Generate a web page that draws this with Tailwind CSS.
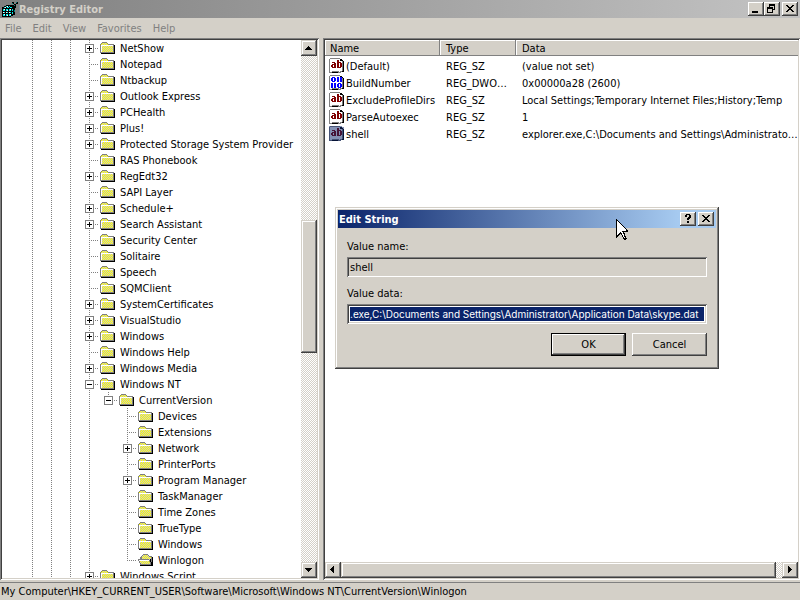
<!DOCTYPE html>
<html lang="en">
<head>
  <meta charset="UTF-8">
  <meta name="viewport" content="width=device-width, initial-scale=1.0">
  <title>Registry Editor</title>
  <script src="https://cdn.jsdelivr.net/npm/@tailwindcss/browser@4"></script>
</head>
<body class="relative flex h-screen flex-col overflow-hidden bg-[#d4d0c8] font-['DejaVu_Sans_Condensed','DejaVu_Sans',sans-serif] text-[11px] leading-4 text-black">

  <!-- shared icons -->
  <svg class="absolute size-0">
    <defs>
      <pattern id="dither" width="2" height="2" patternUnits="userSpaceOnUse">
        <rect width="2" height="2" fill="#ffff00"/>
        <path d="M0 0h1v1h-1zM1 1h1v1h-1z" fill="#c8c8c8"/>
      </pattern>
    </defs>
    <symbol id="folder" viewBox="0 0 16 16">
      <path d="M0 4h1V3h1V2h5v1h1v1h6v9H0z" fill="#808080"/>
      <path d="M1 4h1V3h5v1h1v1h5v8H1z" fill="url(#dither)"/>
      <path d="M1 5h12v1H2v7H1z" fill="#fff"/>
      <path d="M0 12h14v1H0z" fill="#808080"/>
      <path d="M14 5h1v9H1v-1h13z" fill="#000"/>
    </symbol>
    <symbol id="folder-open" viewBox="0 0 16 16">
      <path d="M3 4h1V3h1V2h5v1h1v1h3v9H2V5h1z" fill="#808080"/>
      <path d="M4 4h1V3h5v1h1v1h2v7H4z" fill="url(#dither)"/>
      <path d="M0 7h11v1h1v2h1v3H2v-2H1V9H0z" fill="#808080"/>
      <path d="M1 8h10v2h1v2H3v-1H2V9H1z" fill="url(#dither)"/>
      <path d="M1 8h10v1H1z" fill="#fff"/>
      <path d="M14 5h1v9H2v-1h12zM12 7h1v3h1v3h-1v-3h-1z" fill="#000"/>
    </symbol>
    <symbol id="page" viewBox="0 0 16 16">
      <path d="M0 1h1V0h10v1h2v1h1v12h-2v1H9v-1H3v1H0z" fill="#808080"/>
      <path d="M1 1h10v2h2v10h-2v1h-1v-1H3v1H1z" fill="#fff"/>
      <path d="M11 1v2h3v-1h-1V1zM14 3h1v11h-2v-1h1zM3 14h6v1H3z" fill="#000"/>
    </symbol>
    <symbol id="string" viewBox="0 0 16 16">
      <use href="#page"/>
      <path d="M3 4h3v1h1v5H3V9H2V7h1V6h2V5H3zM4 7v2h1V7zM8 2h2v2h2v1h1v4h-1v1H8zM10 5v4h1V5z" fill="#800000" fill-rule="evenodd"/>
    </symbol>
    <symbol id="binary" viewBox="0 0 16 16">
      <use href="#page"/>
      <path d="M3 2h3v1h1v3H6v1H3V6H2V3h1zM4 3v3h1V3zM8 2h2v5H8zM11 2h2v5h-2zM2 8h2v5H2zM5 8h2v5H5zM9 8h3v1h1v3h-1v1H9v-1H8V9h1zM10 9v3h1V9z" fill="#0000ff" fill-rule="evenodd"/>
    </symbol>
  </svg>

  <header class="flex h-[18px] shrink-0 items-center bg-linear-to-r/srgb from-[#808080] to-[#c0c0c0] to-95% px-0.5">
    <svg class="size-4" viewBox="0 0 16 16" shape-rendering="crispEdges">
      <path d="M0 6h2V5h2V4h5v2h4v8h-2v1h-2v1H0z" fill="#000"/>
      <path d="M10 1h2v2h-2zM14 1h2v2h-2zM12 3h2v4h-2zM9 4h4v2H9z" fill="#000"/>
      <path d="M4 5h2v1H4zM7 5h1v1H7zM2 6h2v1H2zM5 6h2v1H5zM8 6h2v1H8zM1 8h2v2H1zM4 8h2v2H4zM7 8h2v2H7zM1 11h2v1H1zM4 11h2v1H4zM7 11h2v1H7zM1 13h2v2H1zM4 13h2v2H4zM7 13h2v2H7zM10 8h1v2h-1zM10 11h1v2h-1z" fill="#00e8e8"/>
      <path d="M5 5h1v1H5zM3 6h1v1H3zM2 8h1v1H2zM5 9h1v1H5zM8 8h1v1H8zM1 11h1v1H1zM4 11h1v1H4zM7 11h1v1H7zM2 13h1v1H2zM5 14h1v1H5zM8 13h1v1H8z" fill="#fff"/>
      <path d="M14 1h1v1h-1zM12 4h1v1h-1zM10 2h1v1h-1zM12 9h1v2h-1z" fill="#008080"/>
    </svg>
    <h1 class="ml-px flex-1 pt-px font-bold text-[#d4d0c8]">Registry Editor</h1>
    <button aria-label="Minimize" class="h-3.5 w-4 bg-[#d4d0c8] shadow-[inset_-1px_-1px_#404040,inset_1px_1px_#fff,inset_-2px_-2px_#808080]">
      <svg class="h-3.5 w-4" viewBox="0 0 16 14" shape-rendering="crispEdges"><path d="M4 9h6v2H4z"/></svg>
    </button>
    <button aria-label="Restore" class="h-3.5 w-4 bg-[#d4d0c8] shadow-[inset_-1px_-1px_#404040,inset_1px_1px_#fff,inset_-2px_-2px_#808080]">
      <svg class="h-3.5 w-4" viewBox="0 0 16 14" shape-rendering="crispEdges"><path d="M5 2h6v6H9v3H3V5h2zM6 4v1h3v2h1V4zM4 7v3h4V7z" fill-rule="evenodd"/></svg>
    </button>
    <button aria-label="Close" class="ml-0.5 h-3.5 w-4 bg-[#d4d0c8] shadow-[inset_-1px_-1px_#404040,inset_1px_1px_#fff,inset_-2px_-2px_#808080]">
      <svg class="h-3.5 w-4" viewBox="0 0 16 14" shape-rendering="crispEdges"><path d="M4 3h2v1h1v1h2V4h1V3h2v1h-1v1h-1v1H9v1h1v1h1v1h1v1h-2V9H9V8H7v1H6v1H4V9h1V8h1V7h1V6H6V5H5V4H4z"/></svg>
    </button>
  </header>

  <nav class="flex h-5 shrink-0 items-center gap-[11px] px-[5px] pt-px text-[#808080]">
    <button>File</button>
    <button>Edit</button>
    <button>View</button>
    <button>Favorites</button>
    <button>Help</button>
  </nav>

  <main class="flex min-h-0 flex-1 gap-1 pb-0.5">
    <!-- key tree -->
    <section class="flex w-[319px] shrink-0 bg-white p-0.5 shadow-[inset_1px_1px_#808080,inset_-1px_-1px_#fff,inset_2px_2px_#404040,inset_-2px_-2px_#d4d0c8]">
      <ul id="tree" class="min-w-0 flex-1 overflow-hidden pl-[21px]"></ul>
      <div class="flex w-4 flex-col bg-[repeating-conic-gradient(#fff_0_25%,#d4d0c8_0_50%)] bg-[length:2px_2px]">
        <button aria-label="Scroll up" class="size-4 bg-[#d4d0c8] shadow-[inset_-1px_-1px_#404040,inset_1px_1px_#d4d0c8,inset_-2px_-2px_#808080,inset_2px_2px_#fff]">
          <svg class="size-4" viewBox="0 0 16 16" shape-rendering="crispEdges"><path d="M7 6h1v1h1v1h1v1h1v1H4V9h1V8h1V7h1z"/></svg>
        </button>
        <div class="grow-[164]"></div>
        <div class="h-[133px] bg-[#d4d0c8] shadow-[inset_-1px_-1px_#404040,inset_1px_1px_#d4d0c8,inset_-2px_-2px_#808080,inset_2px_2px_#fff]"></div>
        <div class="grow-[209]"></div>
        <button aria-label="Scroll down" class="size-4 bg-[#d4d0c8] shadow-[inset_-1px_-1px_#404040,inset_1px_1px_#d4d0c8,inset_-2px_-2px_#808080,inset_2px_2px_#fff]">
          <svg class="size-4" viewBox="0 0 16 16" shape-rendering="crispEdges"><path d="M4 6h7v1h-1v1H9v1H8v1H7V9H6V8H5V7H4z"/></svg>
        </button>
      </div>
    </section>

    <!-- values of the selected key -->
    <section class="flex min-w-0 flex-1 flex-col bg-white p-0.5 shadow-[inset_1px_1px_#808080,inset_-1px_-1px_#fff,inset_2px_2px_#404040,inset_-2px_-2px_#d4d0c8]">
      <div class="min-h-0 flex-1 overflow-hidden">
        <table class="w-full table-fixed text-left">
          <colgroup><col class="w-[115px]"><col class="w-[76px]"><col></colgroup>
          <thead class="bg-[#d4d0c8] leading-[14px]">
            <tr>
              <th class="p-0 pt-0.5 pl-[5px] font-normal shadow-[inset_-1px_-1px_#808080,inset_1px_1px_#fff]">Name</th>
              <th class="p-0 pt-0.5 pl-1.5 font-normal shadow-[inset_-1px_-1px_#808080,inset_1px_1px_#fff]">Type</th>
              <th class="p-0 pt-0.5 pl-1.5 font-normal shadow-[inset_0_-1px_#808080,inset_1px_1px_#fff]">Data</th>
            </tr>
          </thead>
          <tbody id="values" class="before:block before:h-0.5"></tbody>
        </table>
      </div>
      <div class="flex h-4 bg-[repeating-conic-gradient(#fff_0_25%,#d4d0c8_0_50%)] bg-[length:2px_2px]">
        <button aria-label="Scroll left" class="size-4 bg-[#d4d0c8] shadow-[inset_-1px_-1px_#404040,inset_1px_1px_#d4d0c8,inset_-2px_-2px_#808080,inset_2px_2px_#fff]">
          <svg class="size-4" viewBox="0 0 16 16" shape-rendering="crispEdges"><path d="M5 7h1V6h1V5h1V4h1v7H8v-1H7V9H6V8H5z"/></svg>
        </button>
        <div class="mr-1.5 flex-1 bg-[#d4d0c8] shadow-[inset_-1px_-1px_#404040,inset_1px_1px_#d4d0c8,inset_-2px_-2px_#808080,inset_2px_2px_#fff]"></div>
        <button aria-label="Scroll right" class="size-4 bg-[#d4d0c8] shadow-[inset_-1px_-1px_#404040,inset_1px_1px_#d4d0c8,inset_-2px_-2px_#808080,inset_2px_2px_#fff]">
          <svg class="size-4" viewBox="0 0 16 16" shape-rendering="crispEdges"><path d="M6 4h1v1h1v1h1v1h1v1H9v1H8v1H7v1H6z"/></svg>
        </button>
      </div>
    </section>
  </main>

  <footer class="h-[18px] shrink-0 border-t border-[#808080] pt-px pl-px whitespace-nowrap">My Computer\HKEY_CURRENT_USER\Software\Microsoft\Windows NT\CurrentVersion\Winlogon</footer>

  <!-- edit dialog -->
  <form role="dialog" aria-labelledby="dialog-title" class="absolute top-[207px] left-[335px] w-96 bg-[#d4d0c8] p-[3px] shadow-[inset_-1px_-1px_#404040,inset_1px_1px_#d4d0c8,inset_-2px_-2px_#808080,inset_2px_2px_#fff]">
    <div class="flex h-[18px] items-center bg-linear-to-r/srgb from-[#0a246a] to-[#a6caf0] to-90% pr-0.5 pl-px">
      <h2 id="dialog-title" class="flex-1 pt-px font-bold text-white">Edit String</h2>
      <button type="button" aria-label="Help" class="h-3.5 w-4 bg-[#d4d0c8] shadow-[inset_-1px_-1px_#404040,inset_1px_1px_#fff,inset_-2px_-2px_#808080]">
        <svg class="h-3.5 w-4" viewBox="0 0 16 14" shape-rendering="crispEdges"><path d="M6 2h4v1h1v3h-1v1H9v1H7V6h1V5h1V3H7v2H5V3h1zM7 9h2v2H7z"/></svg>
      </button>
      <button type="button" aria-label="Close" class="ml-0.5 h-3.5 w-4 bg-[#d4d0c8] shadow-[inset_-1px_-1px_#404040,inset_1px_1px_#fff,inset_-2px_-2px_#808080]">
        <svg class="h-3.5 w-4" viewBox="0 0 16 14" shape-rendering="crispEdges"><path d="M4 3h2v1h1v1h2V4h1V3h2v1h-1v1h-1v1H9v1h1v1h1v1h1v1h-2V9H9V8H7v1H6v1H4V9h1V8h1V7h1V6H6V5H5V4H4z"/></svg>
      </button>
    </div>
    <div class="flex flex-col px-[9px] pt-[11px] pb-2.5">
      <label for="value-name">Value name:</label>
      <input id="value-name" type="text" readonly value="shell" class="mt-0.5 h-5 w-full px-[3px] shadow-[inset_1px_1px_#808080,inset_-1px_-1px_#fff,inset_2px_2px_#404040,inset_-2px_-2px_#d4d0c8]">
      <label for="value-data" class="mt-[9px]">Value data:</label>
      <input id="value-data" type="text" value=".exe,C:\Documents and Settings\Administrator\Application Data\skype.dat" class="mt-0.5 h-5 w-full bg-[#0a246a] px-[3px] font-[Inter,sans-serif] text-[10px] text-white shadow-[inset_1px_1px_#808080,inset_-1px_-1px_#fff,inset_2px_2px_#404040,inset_-2px_-2px_#d4d0c8,inset_0_0_0_3px_#fff]">
      <div class="mt-[9px] flex justify-end gap-1.5">
        <button type="button" class="h-[23px] w-[75px] border border-black shadow-[inset_-1px_-1px_#404040,inset_1px_1px_#fff,inset_-2px_-2px_#808080]">OK</button>
        <button type="button" class="h-[23px] w-[75px] shadow-[inset_-1px_-1px_#404040,inset_1px_1px_#fff,inset_-2px_-2px_#808080]">Cancel</button>
      </div>
    </div>
  </form>

  <!-- mouse pointer -->
  <svg class="absolute top-[219px] left-[616px] h-[21px] w-3" viewBox="0 0 12 21" shape-rendering="crispEdges">
    <path d="M0 0l12 12v1H8l3 7-3 1-3-6-5 4z" fill="#000"/>
    <path d="M1 2l9 9v1H6l1 2 2 5H8l-3-6H4l-3 3z" fill="#fff"/>
  </svg>

<script>
  // level, name, expander sign, icon, last child of its level
  const keys = [
    [0, "NetShow", "+"], [0, "Notepad"], [0, "Ntbackup"], [0, "Outlook Express", "+"],
    [0, "PCHealth", "+"], [0, "Plus!", "+"], [0, "Protected Storage System Provider", "+"],
    [0, "RAS Phonebook"], [0, "RegEdt32", "+"], [0, "SAPI Layer"], [0, "Schedule+", "+"],
    [0, "Search Assistant", "+"], [0, "Security Center"], [0, "Solitaire"], [0, "Speech"],
    [0, "SQMClient"], [0, "SystemCertificates", "+"], [0, "VisualStudio", "+"],
    [0, "Windows", "+"], [0, "Windows Help"], [0, "Windows Media", "+"], [0, "Windows NT", "-"],
    [1, "CurrentVersion", "-", "folder", true],
    [2, "Devices"], [2, "Extensions"], [2, "Network", "+"], [2, "PrinterPorts"],
    [2, "Program Manager", "+"], [2, "TaskManager"], [2, "Time Zones"], [2, "TrueType"],
    [2, "Windows"], [2, "Winlogon", "", "folder-open", true],
    [0, "Windows Script", "+"],
  ]

  const values = [
    ["string", "(Default)", "REG_SZ", "(value not set)"],
    ["binary", "BuildNumber", "REG_DWORD", "0x00000a28 (2600)"],
    ["string", "ExcludeProfileDirs", "REG_SZ", "Local Settings;Temporary Internet Files;History;Temp"],
    ["string", "ParseAutoexec", "REG_SZ", "1"],
    ["string", "shell", "REG_SZ", "explorer.exe,C:\\Documents and Settings\\Administrator\\Application Data\\skype.dat"],
  ]

  // one 19px wide cell of the dotted guide lines
  function guide(height, branch) {
    return `<svg class="h-4 w-[19px] shrink-0" viewBox="0 0 19 16" shape-rendering="crispEdges" stroke="#808080" stroke-dasharray="1 1">
      ${height ? `<path d="M9.5 0v${height}"/>` : ""}${branch ? `<path d="M9 8.5h10"/>` : ""}</svg>`
  }

  function expander(sign) {
    return `<button aria-label="${sign === "+" ? "Expand" : "Collapse"}" class="absolute top-1 -left-3.5 size-[9px]">
      <svg class="size-[9px]" viewBox="0 0 9 9" shape-rendering="crispEdges">
        <path d="M.5 .5h8v8h-8z" fill="#fff" stroke="#808080"/>
        <path d="${sign === "+" ? "M2 4h5v1H2zM4 2h1v5H4z" : "M2 4h5v1H2z"}"/>
      </svg></button>`
  }

  document.querySelector("#tree").innerHTML = keys.map(([level, name, sign, icon, last]) => {
    let lines = guide(16) + guide(16) + guide(16)
    for (let i = 0; i < level; i++) lines += guide(i === 0 ? 16 : 0)
    lines += guide(last ? 9 : 16, true)
    return `<li class="flex h-4 whitespace-nowrap">${lines}
      <div class="relative flex pl-px">${sign ? expander(sign) : ""}
        <svg class="size-4" shape-rendering="crispEdges"><use href="#${icon || "folder"}"/></svg>
        <span class="pt-px pl-1">${name}</span>
      </div></li>`
  }).join("")

  document.querySelector("#values").innerHTML = values.map(([icon, name, type, data], i) => `
    <tr>
      <td class="p-0 pt-px pl-1"><div class="flex gap-px whitespace-nowrap">
        <svg class="-mt-px size-4 shrink-0" shape-rendering="crispEdges"><use href="#${icon}"/>
          ${i === 4 ? `<path d="M0 0h13v1h2v13h-3v1H0z" fill="#0a246a" fill-opacity=".5"/>` : ""}</svg>
        ${name}</div></td>
      <td class="truncate p-0 px-1.5 pt-px">${type}</td>
      <td class="truncate p-0 pt-px pl-1.5">${data}</td>
    </tr>`).join("")
</script>
</body>
</html>
